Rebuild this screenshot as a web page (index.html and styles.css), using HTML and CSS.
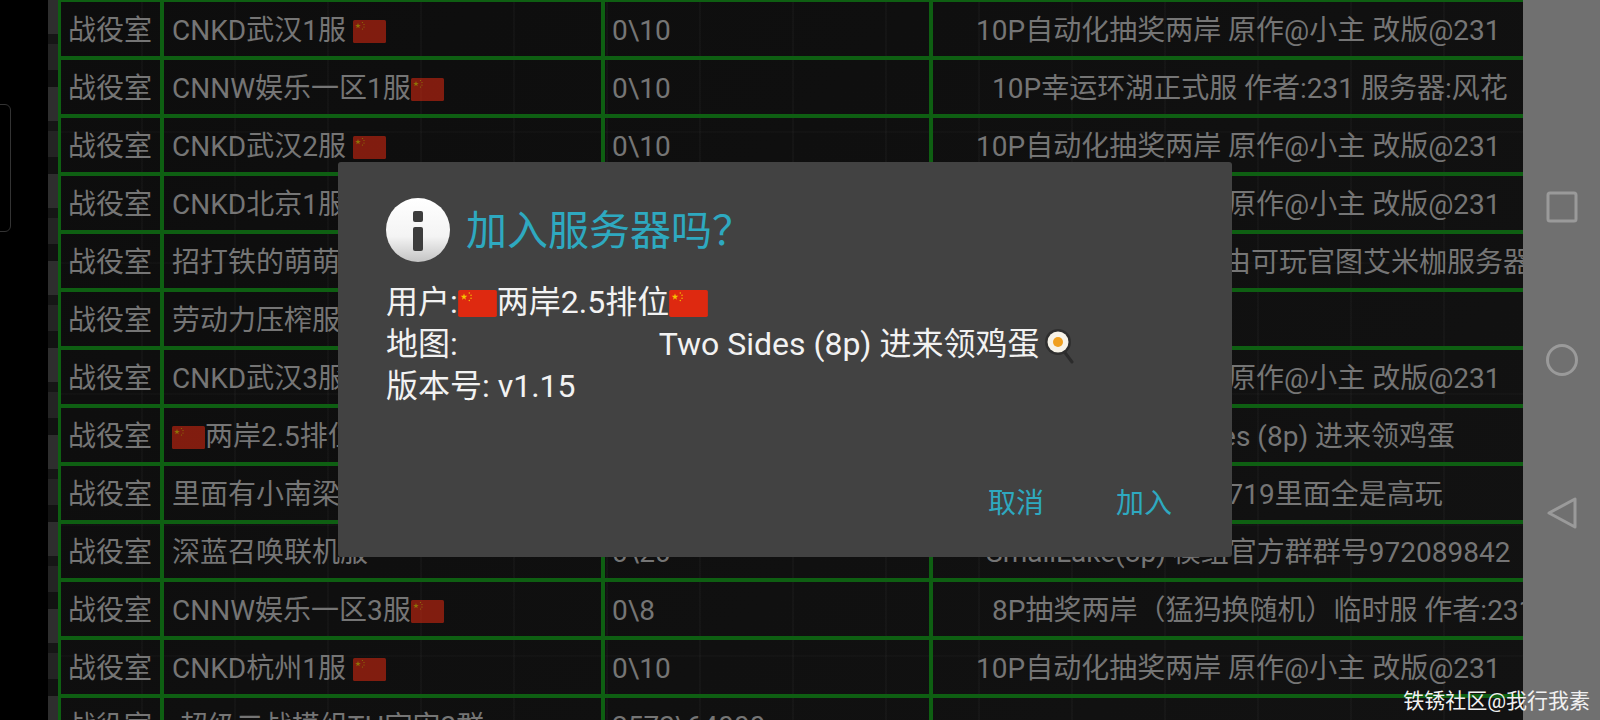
FILE: index.html
```html
<!DOCTYPE html>
<html lang="zh-CN">
<head>
    <meta charset="UTF-8">
    <meta name="viewport" content="width=device-width, initial-scale=1.0">
    <title>战役室</title>
    <link rel="stylesheet" href="styles.css">
</head>
<body>
    <svg class="defs" width="0" height="0" aria-hidden="true">
        <symbol id="cn" viewBox="0 0 33 23">
            <rect x="0" y="0" width="33" height="23" rx="1.5" fill="#de2910"/>
            <polygon points="5,3 5.7,5 7.8,5 6.1,6.3 6.7,8.3 5,7.1 3.3,8.3 3.9,6.3 2.2,5 4.3,5" fill="#f5c400"/>
            <circle cx="9.5" cy="2.5" r="0.6" fill="#f5c400"/>
            <circle cx="11" cy="4.5" r="0.6" fill="#f5c400"/>
            <circle cx="11" cy="7" r="0.6" fill="#f5c400"/>
            <circle cx="9.5" cy="9" r="0.6" fill="#f5c400"/>
        </symbol>
    </svg>

    <div class="edge"><div class="edge-notch"></div></div>

    <main class="game">
        <table class="servers">
            <colgroup>
                <col class="col-type">
                <col class="col-name">
                <col class="col-count">
                <col>
            </colgroup>
            <tbody>
                <tr>
                    <td>战役室</td>
                    <td>CNKD武汉1服 <svg class="flag"><use href="#cn"/></svg></td>
                    <td>0\10</td>
                    <td class="ind-a">10P自动化抽奖两岸 原作@小主 改版@231</td>
                </tr>
                <tr>
                    <td>战役室</td>
                    <td>CNNW娱乐一区1服<svg class="flag"><use href="#cn"/></svg></td>
                    <td>0\10</td>
                    <td class="ind-b">10P幸运环湖正式服 作者:231 服务器:风花</td>
                </tr>
                <tr>
                    <td>战役室</td>
                    <td>CNKD武汉2服 <svg class="flag"><use href="#cn"/></svg></td>
                    <td>0\10</td>
                    <td class="ind-a">10P自动化抽奖两岸 原作@小主 改版@231</td>
                </tr>
                <tr>
                    <td>战役室</td>
                    <td>CNKD北京1服 <svg class="flag"><use href="#cn"/></svg></td>
                    <td>0\10</td>
                    <td class="ind-a">10P自动化抽奖两岸 原作@小主 改版@231</td>
                </tr>
                <tr>
                    <td>战役室</td>
                    <td>招打铁的萌萌新服务器</td>
                    <td>0\10</td>
                    <td class="ind-c">自由可玩官图艾米枷服务器</td>
                </tr>
                <tr>
                    <td>战役室</td>
                    <td>劳动力压榨服</td>
                    <td>0\10</td>
                    <td></td>
                </tr>
                <tr>
                    <td>战役室</td>
                    <td>CNKD武汉3服 <svg class="flag"><use href="#cn"/></svg></td>
                    <td>0\10</td>
                    <td class="ind-a">10P自动化抽奖两岸 原作@小主 改版@231</td>
                </tr>
                <tr>
                    <td>战役室</td>
                    <td><svg class="flag"><use href="#cn"/></svg>两岸2.5排位<svg class="flag"><use href="#cn"/></svg></td>
                    <td>0\8</td>
                    <td class="ind-d">Two Sides (8p) 进来领鸡蛋</td>
                </tr>
                <tr>
                    <td>战役室</td>
                    <td>里面有小南梁服务器</td>
                    <td>0\10</td>
                    <td class="ind-e">群号972089719里面全是高玩</td>
                </tr>
                <tr>
                    <td>战役室</td>
                    <td>深蓝召唤联机服</td>
                    <td>0\20</td>
                    <td class="ind-f">SmallLake(8p) 模组官方群群号972089842</td>
                </tr>
                <tr>
                    <td>战役室</td>
                    <td>CNNW娱乐一区3服<svg class="flag"><use href="#cn"/></svg></td>
                    <td>0\8</td>
                    <td class="ind-b">8P抽奖两岸（猛犸换随机）临时服 作者:231</td>
                </tr>
                <tr>
                    <td>战役室</td>
                    <td>CNKD杭州1服 <svg class="flag"><use href="#cn"/></svg></td>
                    <td>0\10</td>
                    <td class="ind-a">10P自动化抽奖两岸 原作@小主 改版@231</td>
                </tr>
                <tr>
                    <td>战役室</td>
                    <td>-超级二战模组TH宇宙3群</td>
                    <td>2573\64000</td>
                    <td></td>
                </tr>
            </tbody>
        </table>
    </main>

    <nav class="navbar">
        <svg class="nav-icon" viewBox="0 0 32 32"><rect x="2" y="2" width="28" height="28" rx="2"/></svg>
        <svg class="nav-icon" viewBox="0 0 32 32"><circle cx="16" cy="16" r="14.5"/></svg>
        <svg class="nav-icon" viewBox="0 0 32 32"><path d="M29 2 L29 30 L3 16 Z" stroke-linejoin="round"/></svg>
    </nav>

    <div class="dialog">
        <div class="dialog-head">
            <svg class="info-icon" viewBox="0 0 64 64">
                <defs>
                    <linearGradient id="infoFill" x1="0" y1="0" x2="0" y2="1">
                        <stop offset="0" stop-color="#ffffff"/>
                        <stop offset="0.6" stop-color="#f4f4f4"/>
                        <stop offset="1" stop-color="#c4c4c4"/>
                    </linearGradient>
                </defs>
                <circle cx="32" cy="32" r="32" fill="url(#infoFill)"/>
                <rect x="27" y="13" width="10" height="11" rx="2" fill="#3d3d3d"/>
                <rect x="27" y="29" width="10" height="24" rx="2" fill="#3d3d3d"/>
            </svg>
            <h2 class="dialog-title">加入服务器吗？</h2>
        </div>
        <div class="dialog-body">
            <p>用户:<svg class="flag flag-big"><use href="#cn"/></svg>两岸2.5排位<svg class="flag flag-big"><use href="#cn"/></svg></p>
            <p>地图:<span class="map-name">Two Sides (8p) 进来领鸡蛋</span>
                <svg class="egg" viewBox="0 0 30 36">
                    <line x1="19" y1="22" x2="28" y2="34" stroke="#2b2b2b" stroke-width="3" stroke-linecap="round"/>
                    <circle cx="14" cy="14" r="13" fill="#2f2f2f"/>
                    <circle cx="14" cy="14" r="10.5" fill="#f7f3e8"/>
                    <circle cx="14" cy="14" r="5" fill="#f0a020"/>
                </svg>
            </p>
            <p>版本号: v1.15</p>
        </div>
        <div class="dialog-actions">
            <span class="action">取消</span>
            <span class="action">加入</span>
        </div>
    </div>

    <div class="watermark">铁锈社区@我行我素</div>
</body>
</html>
```

FILE: styles.css
```css
* {
    box-sizing: border-box;
}
html, body {
    margin: 0;
    height: 720px;
    overflow: hidden;
}
body {
    display: flex;
    background: #000;
    font-family: Roboto, "Noto Sans CJK SC", sans-serif;
    color: #757575;
}
.defs {
    position: absolute;
}

/* left side */
.edge {
    width: 48px;
    flex: none;
    background: #000;
}
.edge-notch {
    position: absolute;
    left: -6px;
    top: 104px;
    width: 17px;
    height: 128px;
    border: 1px solid #333;
    border-radius: 6px;
}

/* game table, the backdrop is a faint metal plate pattern */
.game {
    flex: 1;
    min-width: 0;
    overflow: hidden;
    padding-left: 10px;
    background-color: #0e0e0e;
    background-image:
        repeating-linear-gradient(180deg, #2e2e2e 0, #2e2e2e 34px, #161616 34px, #161616 44px, #242424 44px, #242424 70px, #121212 70px, #121212 87px),
        repeating-linear-gradient(90deg, rgba(255, 255, 255, 0.022) 0, rgba(255, 255, 255, 0.022) 2px, transparent 2px, transparent 93px),
        repeating-linear-gradient(180deg, rgba(255, 255, 255, 0.014) 0, rgba(255, 255, 255, 0.014) 2px, transparent 2px, transparent 131px),
        linear-gradient(135deg, #0d0d0d, #121212);
    background-size: 10px 100%, auto, auto, auto;
    background-repeat: no-repeat, repeat, repeat, repeat;
}
.servers {
    width: 1465px;
    table-layout: fixed;
    border-collapse: separate;
    border-spacing: 0;
    border-top: 2px solid #0e5f12;
    border-left: 3px solid #0e5f12;
    font-size: 28px;
    line-height: 40px;
}
.col-type {
    width: 103px;
}
.col-name {
    width: 441px;
}
.col-count {
    width: 328px;
}
.servers td {
    height: 58px;
    padding: 4px 0 0 7px;
    border-right: 4px solid #0e5f12;
    border-bottom: 4px solid #0e5f12;
    white-space: nowrap;
    overflow: hidden;
}
.servers td:nth-child(2) {
    padding-left: 8px;
}
.servers td:last-child {
    border-right: 0;
}
.flag {
    width: 33px;
    height: 23px;
    vertical-align: -3px;
    opacity: 0.55;
}
.servers .ind-a {
    padding-left: 43px;
}
.servers .ind-b {
    padding-left: 59px;
}
.servers .ind-c {
    padding-left: 262px;
}
.servers .ind-d {
    padding-left: 189px;
}
.servers .ind-e {
    padding-left: 144px;
}
.servers .ind-f {
    padding-left: 53px;
}

/* nav bar */
.navbar {
    width: 77px;
    flex: none;
    display: flex;
    flex-direction: column;
    align-items: center;
    justify-content: center;
    gap: 121px;
    background: #707070;
}
.nav-icon {
    width: 32px;
    height: 32px;
    fill: none;
    stroke: #9a9a9a;
    stroke-width: 3;
}

/* dialog */
.dialog {
    position: absolute;
    left: 338px;
    top: 162px;
    width: 894px;
    height: 395px;
    display: flex;
    flex-direction: column;
    padding: 36px 48px 0;
    background: #424242;
    border-radius: 3px;
}
.dialog-head {
    display: flex;
    align-items: center;
    gap: 16px;
}
.info-icon {
    width: 64px;
    height: 64px;
    flex: none;
}
.dialog-title {
    margin: 0;
    padding-top: 3px;
    font-size: 41px;
    font-weight: 400;
    line-height: 61px;
    height: 64px;
    color: #2ea9c0;
}
.dialog-body {
    margin-top: 19px;
    font-size: 32px;
    line-height: 42px;
    color: #f2f2f2;
}
.dialog-body p {
    margin: 0;
    height: 42px;
}
.flag-big {
    width: 39px;
    height: 27px;
    vertical-align: -4px;
    opacity: 1;
}
.map-name {
    margin-left: 201px;
}
.egg {
    width: 30px;
    height: 36px;
    margin-left: -3px;
    vertical-align: -9px;
}
.dialog-actions {
    margin-top: auto;
    display: flex;
    justify-content: flex-end;
    gap: 72px;
    padding: 0 12px 33px 0;
}
.action {
    font-size: 28px;
    line-height: 40px;
    color: #2ea9c0;
}

.watermark {
    position: absolute;
    right: 10px;
    bottom: 5px;
    font-size: 21px;
    line-height: 28px;
    color: #f0f0f0;
}
```
